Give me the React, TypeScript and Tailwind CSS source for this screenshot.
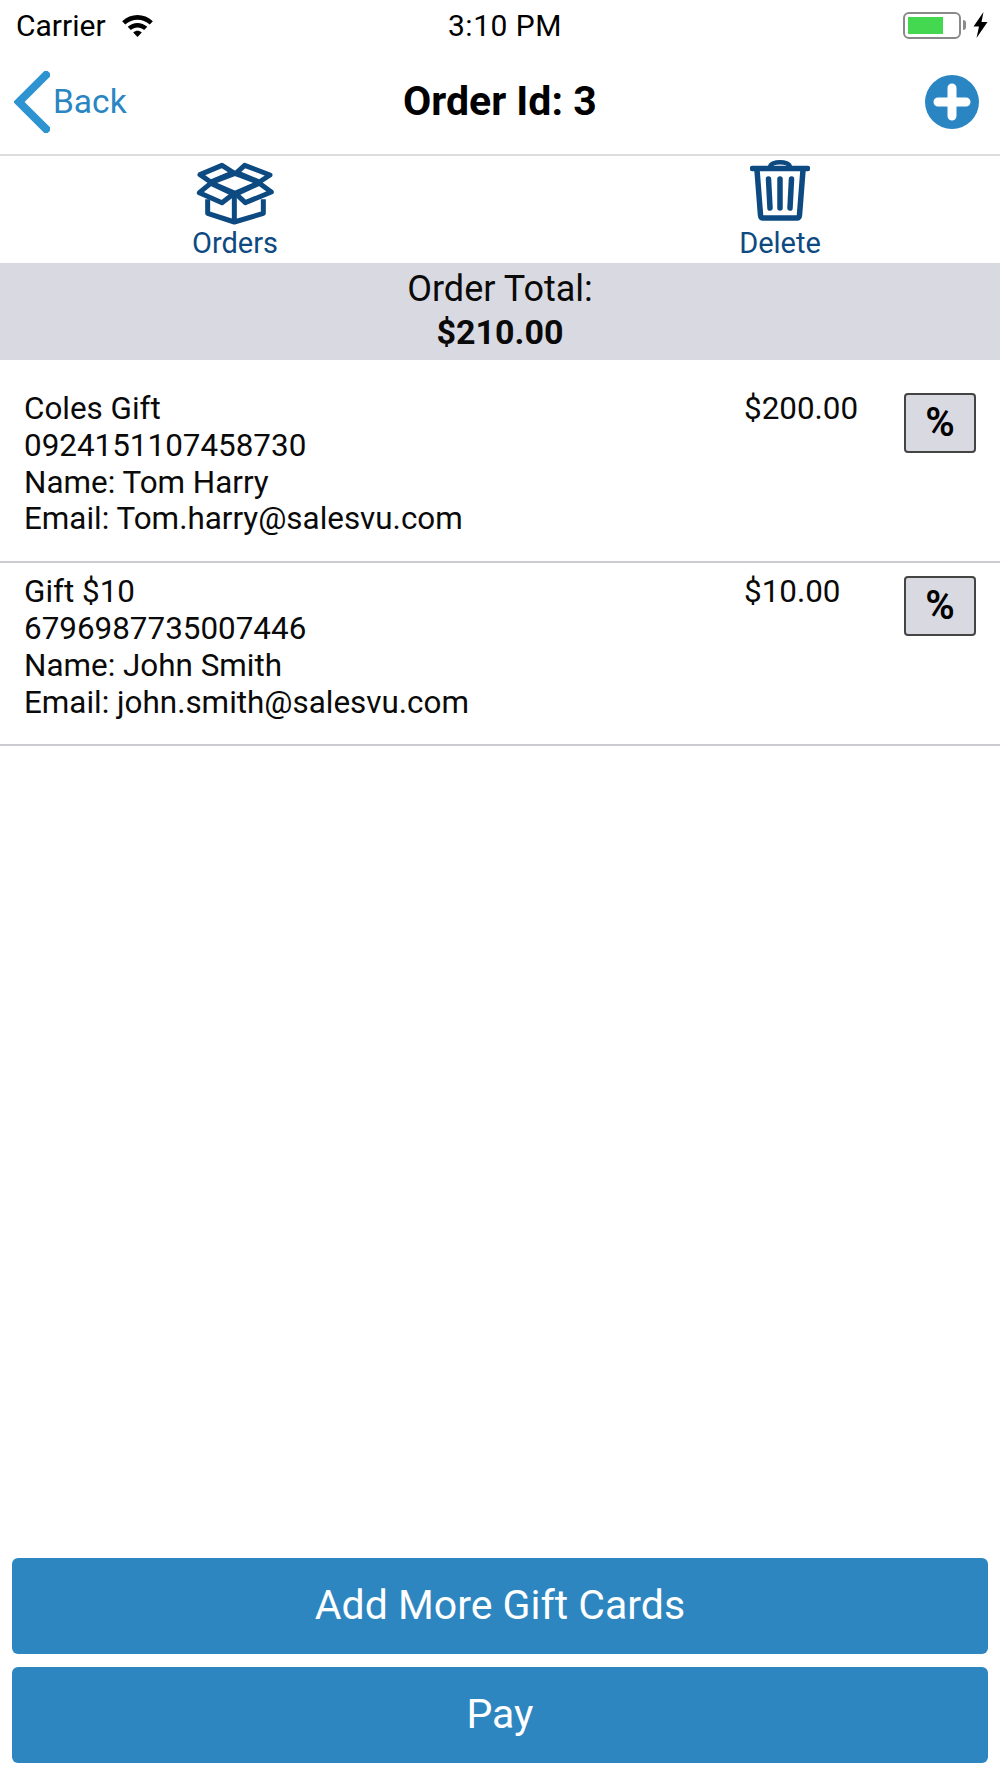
const ITEMS = [
  {
    title: 'Coles Gift',
    code: '0924151107458730',
    name: 'Name: Tom Harry',
    email: 'Email: Tom.harry@salesvu.com',
    price: '$200.00',
  },
  {
    title: 'Gift $10',
    code: '6796987735007446',
    name: 'Name: John Smith',
    email: 'Email: john.smith@salesvu.com',
    price: '$10.00',
  },
]

function WifiIcon() {
  return (
    <svg width="33" height="23" viewBox="0 0 34 24" className="ml-[15px]">
      <path d="M1 7.5C10 -1 24 -1 33 7.5L29.8 11C22.5 4.3 11.5 4.3 4.2 11Z" fill="#000" />
      <path d="M6.8 13.4C12.8 8 21.2 8 27.2 13.4L24 16.8C19.8 13.2 14.2 13.2 10 16.8Z" fill="#000" />
      <path d="M12.5 19.2C15.3 17 18.7 17 21.5 19.2L17 24Z" fill="#000" />
    </svg>
  )
}

function BatteryIcon() {
  return (
    <div className="flex items-center">
      <div className="flex h-[27px] w-[58px] items-center rounded-[6px] border-2 border-[#8a8a8a] px-[3px]">
        <div className="h-[17px] w-[35px] bg-[#44d851]" />
      </div>
      <div className="ml-[2px] h-[10px] w-[3px] rounded-r-full bg-[#8a8a8a]" />
    </div>
  )
}

function BoltIcon() {
  return (
    <svg width="15" height="26" viewBox="0 0 15 26" className="ml-[7px]">
      <path d="M10.5 0L0.5 14.5H6L3.5 26L14.5 10H8.5Z" fill="#000" />
    </svg>
  )
}

function BoxIcon() {
  return (
    <svg width="78" height="64" viewBox="78 33 234 192" fill="none" stroke="#0d4a82" strokeWidth="15" strokeLinejoin="round">
      <path d="M90 74L156 46L190 68L122 96Z" />
      <path d="M200 68L224 46L300 75L268 96Z" />
      <path d="M122 98L195 70L268 98L195 130Z" />
      <path d="M88 128L122 100L190 132L156 158Z" />
      <path d="M304 126L268 100L198 132L226 158Z" />
      <path d="M113 148V190L193 216L280 190V148" />
      <path d="M193 132V216" />
    </svg>
  )
}

function TrashIcon() {
  return (
    <svg width="60" height="62" viewBox="0 0 60 62" fill="none" stroke="#0d4a82" strokeLinecap="round" strokeLinejoin="round">
      <path d="M2.5 9.5H57.5" strokeWidth="5.5" />
      <path d="M20 8C21 1.5 39 1.5 40 8" strokeWidth="4.5" />
      <path d="M7 11L10.5 56C10.7 58 11.5 59 13 59H47C48.5 59 49.3 58 49.5 56L53 11" strokeWidth="5.5" />
      <path d="M18.5 20L20 49" strokeWidth="5.5" />
      <path d="M30 20V49" strokeWidth="5.5" />
      <path d="M41.5 20L40 49" strokeWidth="5.5" />
    </svg>
  )
}

function PlusIcon() {
  return (
    <svg width="54" height="54" viewBox="0 0 54 54">
      <circle cx="27" cy="27" r="27" fill="#2a86c2" />
      <path d="M27 13V41M13 27H41" stroke="#fff" strokeWidth="9" strokeLinecap="round" />
    </svg>
  )
}

function BackChevron() {
  return (
    <svg width="36" height="62" viewBox="0 0 36 62">
      <path d="M32 4L5 31L32 58" fill="none" stroke="#2d93d1" strokeWidth="8" strokeLinecap="square" />
    </svg>
  )
}

function ItemRow({ item, top, buttonTop }: { item: (typeof ITEMS)[number]; top: string; buttonTop: string }) {
  return (
    <div className="flex border-b-2 border-[#cbcbd1] pl-[24px] text-[31.4px] leading-[36.8px] text-[#0a0a0a]">
      <div className={`w-[720px] pb-[23px] ${top}`}>
        <div>{item.title}</div>
        <div>{item.code}</div>
        <div>{item.name}</div>
        <div>{item.email}</div>
      </div>
      <div className={`w-[160px] ${top}`}>{item.price}</div>
      <div className={buttonTop}>
        <div className="flex h-[60px] w-[72px] items-center justify-center rounded-[4px] border-2 border-[#444] bg-[#d9d9e1] text-[40px] font-semibold text-black">
          %
        </div>
      </div>
    </div>
  )
}

export default function App() {
  return (
    <div className="flex h-[1778px] w-[1000px] flex-col bg-white font-['Roboto',sans-serif]">
      <div className="flex h-[50px] items-center pl-[16px] pr-[12px] text-[30px] text-black">
        <div className="flex w-[432px] items-center">
          <span>Carrier</span>
          <WifiIcon />
        </div>
        <span className="w-[113px] whitespace-nowrap text-center tracking-[0.5px]">3:10 PM</span>
        <div className="ml-auto flex items-center">
          <BatteryIcon />
          <BoltIcon />
        </div>
      </div>

      <div className="flex h-[106px] items-center border-b-2 border-[#dcdcdc] pl-[14px] pr-[21px]">
        <div className="flex w-[389px] items-center">
          <BackChevron />
          <span className="ml-[3px] text-[33.5px] text-[#2a86c2]">Back</span>
        </div>
        <span className="w-[193px] whitespace-nowrap text-center text-[41px] font-bold text-black">Order Id: 3</span>
        <div className="ml-auto">
          <PlusIcon />
        </div>
      </div>

      <div className="flex h-[107px] justify-between text-[29px] leading-[30px] text-[#0d4a82]">
        <div className="flex w-[470px] flex-col items-center pt-[5px]">
          <BoxIcon />
          <span className="mt-[3px]">Orders</span>
        </div>
        <div className="flex w-[440px] flex-col items-center pt-[3px]">
          <TrashIcon />
          <span className="mt-[7px]">Delete</span>
        </div>
      </div>

      <div className="flex h-[97px] flex-col items-center justify-center bg-[#d9d9e1] pb-[2px] text-[36px] leading-[43px] text-[#0a0a0a]">
        <span>Order Total:</span>
        <span className="text-[34px] font-bold">$210.00</span>
      </div>

      <div className="pt-[22px]">
        <ItemRow item={ITEMS[0]} top="pt-[9px]" buttonTop="pt-[11px]" />
      </div>
      <ItemRow item={ITEMS[1]} top="pt-[11px]" buttonTop="pt-[13px]" />

      <div className="mt-auto flex flex-col gap-[13px] px-[12px] pb-[15px]">
        <button className="h-[96px] rounded-[6px] bg-[#2d86c0] text-[41px] text-white">Add More Gift Cards</button>
        <button className="h-[96px] rounded-[6px] bg-[#2d86c0] text-[41px] text-white">Pay</button>
      </div>
    </div>
  )
}
